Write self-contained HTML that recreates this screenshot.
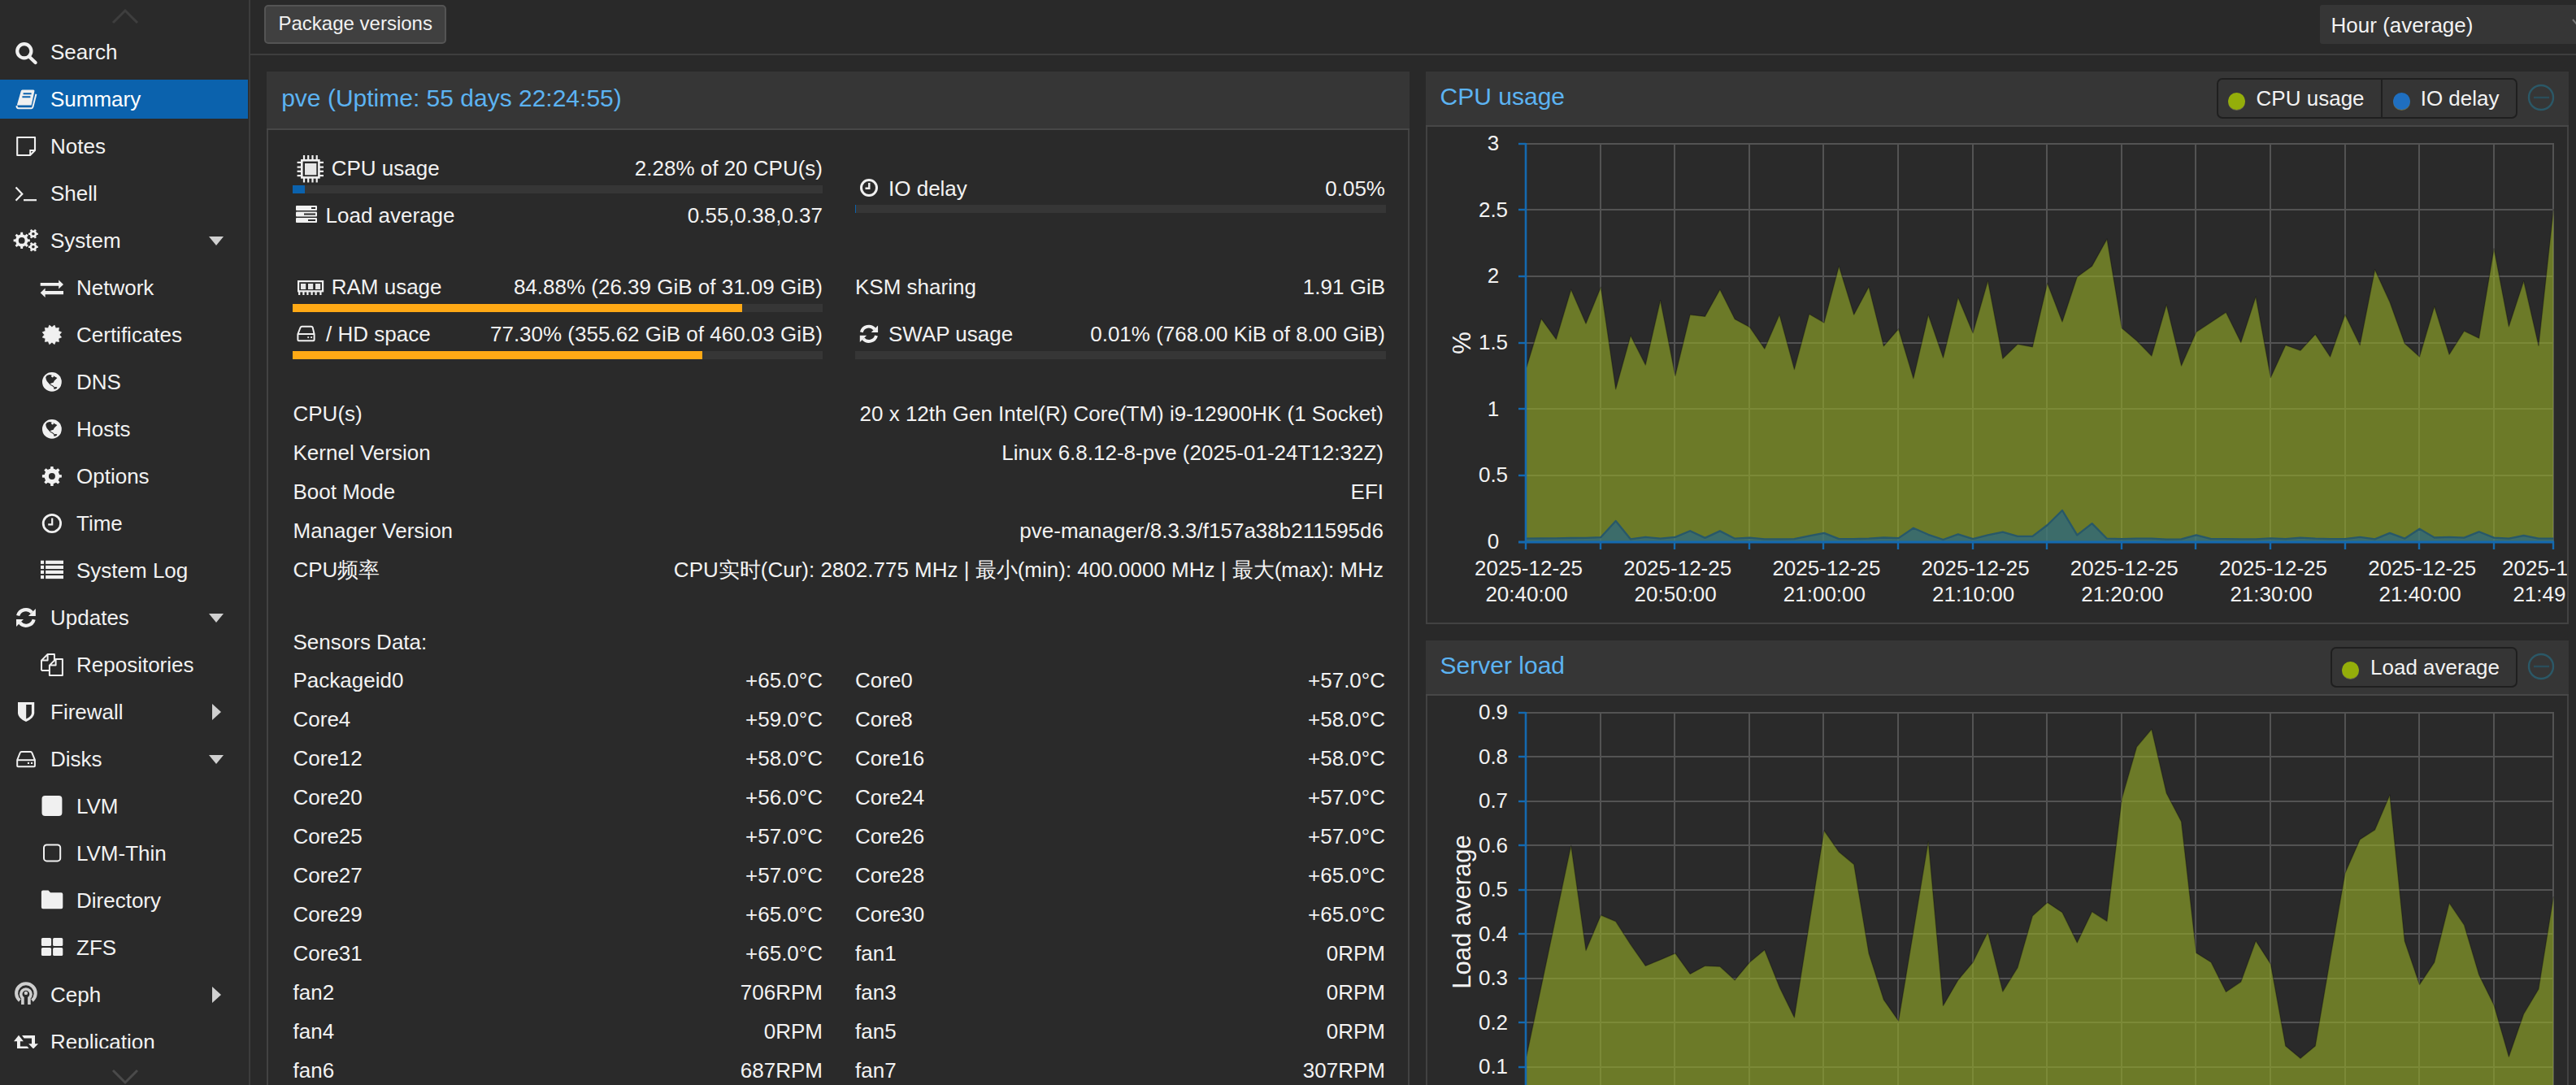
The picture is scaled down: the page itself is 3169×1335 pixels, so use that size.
<!DOCTYPE html>
<html><head><meta charset="utf-8"><style>
html,body{margin:0;padding:0;width:3169px;height:1335px;overflow:hidden;background:#292929;}
body{position:relative;font-family:"Liberation Sans", sans-serif;}
.t{position:absolute;white-space:nowrap;line-height:1;color:#f2f2f2;font-family:"Liberation Sans", sans-serif;}
.r{position:absolute;}
</style></head><body>
<div class="r" style="left:0px;top:0px;width:306px;height:1335px;background:#2a2a2a;"></div>
<div class="r" style="left:306px;top:0px;width:2px;height:1335px;background:#3c3c3c;"></div>
<div class="r" style="left:0px;top:98px;width:305px;height:48px;background:#0b62ad;"></div>
<div class="t" style="left:62px;top:51.3px;font-size:26px;color:#f2f2f2;">Search</div>
<div class="t" style="left:62px;top:109.3px;font-size:26px;color:#ffffff;">Summary</div>
<div class="t" style="left:62px;top:167.3px;font-size:26px;color:#f2f2f2;">Notes</div>
<div class="t" style="left:62px;top:225.3px;font-size:26px;color:#f2f2f2;">Shell</div>
<div class="t" style="left:62px;top:283.3px;font-size:26px;color:#f2f2f2;">System</div>
<div class="r" style="left:257px;top:291px;width:0;height:0;border-left:9.5px solid transparent;border-right:9.5px solid transparent;border-top:11px solid #d0d0d0"></div>
<div class="t" style="left:94px;top:341.3px;font-size:26px;color:#f2f2f2;">Network</div>
<div class="t" style="left:94px;top:399.3px;font-size:26px;color:#f2f2f2;">Certificates</div>
<div class="t" style="left:94px;top:457.3px;font-size:26px;color:#f2f2f2;">DNS</div>
<div class="t" style="left:94px;top:515.3px;font-size:26px;color:#f2f2f2;">Hosts</div>
<div class="t" style="left:94px;top:573.3px;font-size:26px;color:#f2f2f2;">Options</div>
<div class="t" style="left:94px;top:631.3px;font-size:26px;color:#f2f2f2;">Time</div>
<div class="t" style="left:94px;top:689.3px;font-size:26px;color:#f2f2f2;">System Log</div>
<div class="t" style="left:62px;top:747.3px;font-size:26px;color:#f2f2f2;">Updates</div>
<div class="r" style="left:257px;top:755px;width:0;height:0;border-left:9.5px solid transparent;border-right:9.5px solid transparent;border-top:11px solid #d0d0d0"></div>
<div class="t" style="left:94px;top:805.3px;font-size:26px;color:#f2f2f2;">Repositories</div>
<div class="t" style="left:62px;top:863.3px;font-size:26px;color:#f2f2f2;">Firewall</div>
<div class="r" style="left:261px;top:866px;width:0;height:0;border-top:10px solid transparent;border-bottom:10px solid transparent;border-left:11px solid #d0d0d0"></div>
<div class="t" style="left:62px;top:921.3px;font-size:26px;color:#f2f2f2;">Disks</div>
<div class="r" style="left:257px;top:929px;width:0;height:0;border-left:9.5px solid transparent;border-right:9.5px solid transparent;border-top:11px solid #d0d0d0"></div>
<div class="t" style="left:94px;top:979.3px;font-size:26px;color:#f2f2f2;">LVM</div>
<div class="t" style="left:94px;top:1037.3px;font-size:26px;color:#f2f2f2;">LVM-Thin</div>
<div class="t" style="left:94px;top:1095.3px;font-size:26px;color:#f2f2f2;">Directory</div>
<div class="t" style="left:94px;top:1153.3px;font-size:26px;color:#f2f2f2;">ZFS</div>
<div class="t" style="left:62px;top:1211.3px;font-size:26px;color:#f2f2f2;">Ceph</div>
<div class="r" style="left:261px;top:1214px;width:0;height:0;border-top:10px solid transparent;border-bottom:10px solid transparent;border-left:11px solid #d0d0d0"></div>
<div class="t" style="left:62px;top:1269.3px;font-size:26px;color:#f2f2f2;">Replication</div>
<svg class="r" style="left:0;top:0;width:306px;height:1290px" viewBox="0 0 306 1290"><circle cx="29.8" cy="62.8" r="8.6" fill="none" stroke="#f0f0f0" stroke-width="4.2"/><line x1="37" y1="70.8" x2="43.6" y2="77" stroke="#f0f0f0" stroke-width="4.3" stroke-linecap="round"/><path d="M27.5,110.4 H41 Q42.8,110.4 42.4,112.2 L38.6,129.6 H20.8 L25.8,112 Q26.2,110.4 27.5,110.4 Z" fill="#f0f0f0"/><path d="M28.6,115.2 H38.6 M27.4,119.2 H37.4" stroke="#0b62ad" stroke-width="1.9"/><path d="M20.6,130 Q20.2,133.2 23,133.2 H38.6 Q40,133.2 40.4,131.5 L44.4,115.8" fill="none" stroke="#f0f0f0" stroke-width="2"/><path d="M21.2,169 H43 V185 L37,191 H21.2 Z" fill="none" stroke="#f0f0f0" stroke-width="2.1" stroke-linejoin="round"/><path d="M43,185 H37.2 V191" fill="none" stroke="#f0f0f0" stroke-width="2"/><path d="M19.5,230.5 L27.3,238.8 L19.5,246.8" fill="none" stroke="#f0f0f0" stroke-width="2.2"/><path d="M29,246.2 H45" stroke="#f0f0f0" stroke-width="2.2"/><path d="M33.72,292.99 L34.13,294.30 L36.81,294.54 L36.81,297.26 L34.13,297.50 L33.72,298.81 L33.08,300.02 L34.81,302.09 L32.89,304.01 L30.82,302.28 L29.61,302.92 L28.30,303.33 L28.06,306.01 L25.34,306.01 L25.10,303.33 L23.79,302.92 L22.58,302.28 L20.51,304.01 L18.59,302.09 L20.32,300.02 L19.68,298.81 L19.27,297.50 L16.59,297.26 L16.59,294.54 L19.27,294.30 L19.68,292.99 L20.32,291.78 L18.59,289.71 L20.51,287.79 L22.58,289.52 L23.79,288.88 L25.10,288.47 L25.34,285.79 L28.06,285.79 L28.30,288.47 L29.61,288.88 L30.82,289.52 L32.89,287.79 L34.81,289.71 L33.08,291.78 Z M30.60,295.90 A3.9,3.9 0 1 0 22.80,295.90 A3.9,3.9 0 1 0 30.60,295.90 Z" fill="#f0f0f0" fill-rule="evenodd"/><path d="M44.71,285.60 L45.11,286.51 L46.79,286.64 L46.79,288.96 L45.11,289.09 L44.71,290.00 L44.12,290.80 L44.84,292.32 L42.84,293.48 L41.88,292.09 L40.90,292.20 L39.92,292.09 L38.96,293.48 L36.96,292.32 L37.68,290.80 L37.09,290.00 L36.69,289.09 L35.01,288.96 L35.01,286.64 L36.69,286.51 L37.09,285.60 L37.68,284.80 L36.96,283.28 L38.96,282.12 L39.92,283.51 L40.90,283.40 L41.88,283.51 L42.84,282.12 L44.84,283.28 L44.12,284.80 Z M42.70,287.80 A1.8,1.8 0 1 0 39.10,287.80 A1.8,1.8 0 1 0 42.70,287.80 Z" fill="#f0f0f0" fill-rule="evenodd"/><path d="M44.71,301.60 L45.11,302.51 L46.79,302.64 L46.79,304.96 L45.11,305.09 L44.71,306.00 L44.12,306.80 L44.84,308.32 L42.84,309.48 L41.88,308.09 L40.90,308.20 L39.92,308.09 L38.96,309.48 L36.96,308.32 L37.68,306.80 L37.09,306.00 L36.69,305.09 L35.01,304.96 L35.01,302.64 L36.69,302.51 L37.09,301.60 L37.68,300.80 L36.96,299.28 L38.96,298.12 L39.92,299.51 L40.90,299.40 L41.88,299.51 L42.84,298.12 L44.84,299.28 L44.12,300.80 Z M42.70,303.80 A1.8,1.8 0 1 0 39.10,303.80 A1.8,1.8 0 1 0 42.70,303.80 Z" fill="#f0f0f0" fill-rule="evenodd"/><path d="M49.7,348.1 H72.2 V344.5 L78,350 L72.2,355.4 V351.8 H49.7 Z" fill="#f0f0f0"/><path d="M78,357.9 H55.6 V354.6 L49.7,360.2 L55.6,366 V362.3 H78 Z" fill="#f0f0f0"/><path d="M67.06,400.12 L68.55,403.85 L72.53,403.27 L71.95,407.25 L75.68,408.74 L73.20,411.90 L75.68,415.06 L71.95,416.55 L72.53,420.53 L68.55,419.95 L67.06,423.68 L63.90,421.20 L60.74,423.68 L59.25,419.95 L55.27,420.53 L55.85,416.55 L52.12,415.06 L54.60,411.90 L52.12,408.74 L55.85,407.25 L55.27,403.27 L59.25,403.85 L60.74,400.12 L63.90,402.60 Z" fill="#f0f0f0" stroke="#f0f0f0" stroke-width="0.6" stroke-linejoin="round"/><circle cx="63.9" cy="469.9" r="11.9" fill="#f0f0f0"/><path d="M56.2,464.3 L57.7,461.9 L60.8,460.9 L63.7,461.4 L62.9,463.2 L64.5,464.5 L66,463.7 L65.5,462.2 L67.5,463.5 L70.4,465.0 L68.6,466.8 L66.8,468.4 L65.7,470.7 L63.9,471.2 L62.1,472.0 L61.6,473.5 L60.3,472.0 L57.7,468.9 L56.7,466.8 Z M66.5,476.4 L68.6,475.9 L70.4,476.6 L69.6,477.9 L67.5,478.7 L66,478.5 Z" fill="#2a2a2a"/><path d="M61.8,473.2 L64.6,474.6 L66.8,476.6" fill="none" stroke="#2a2a2a" stroke-width="1.1"/><circle cx="63.9" cy="527.9" r="11.9" fill="#f0f0f0"/><path d="M56.2,522.3 L57.7,519.9 L60.8,518.9 L63.7,519.4 L62.9,521.2 L64.5,522.5 L66,521.7 L65.5,520.2 L67.5,521.5 L70.4,523.0 L68.6,524.8 L66.8,526.4 L65.7,528.7 L63.9,529.2 L62.1,530.0 L61.6,531.5 L60.3,530.0 L57.7,526.9 L56.7,524.8 Z M66.5,534.4 L68.6,533.9 L70.4,534.6 L69.6,535.9 L67.5,536.7 L66,536.5 Z" fill="#2a2a2a"/><path d="M61.8,531.2 L64.6,532.6 L66.8,534.6" fill="none" stroke="#2a2a2a" stroke-width="1.1"/><path d="M72.49,582.34 L72.99,583.94 L75.89,584.29 L75.89,587.51 L72.99,587.86 L72.49,589.46 L71.71,590.94 L73.52,593.24 L71.24,595.52 L68.94,593.71 L67.46,594.49 L65.86,594.99 L65.51,597.89 L62.29,597.89 L61.94,594.99 L60.34,594.49 L58.86,593.71 L56.56,595.52 L54.28,593.24 L56.09,590.94 L55.31,589.46 L54.81,587.86 L51.91,587.51 L51.91,584.29 L54.81,583.94 L55.31,582.34 L56.09,580.86 L54.28,578.56 L56.56,576.28 L58.86,578.09 L60.34,577.31 L61.94,576.81 L62.29,573.91 L65.51,573.91 L65.86,576.81 L67.46,577.31 L68.94,578.09 L71.24,576.28 L73.52,578.56 L71.71,580.86 Z M67.90,585.90 A4.0,4.0 0 1 0 59.90,585.90 A4.0,4.0 0 1 0 67.90,585.90 Z" fill="#f0f0f0" fill-rule="evenodd"/><circle cx="63.9" cy="644" r="10.7" fill="none" stroke="#f0f0f0" stroke-width="2.8"/><path d="M64.2,637.5 V645.4 H59.2" fill="none" stroke="#f0f0f0" stroke-width="2.2"/><rect x="50" y="689.7" width="4.1" height="4.2" fill="#f0f0f0"/><rect x="56.1" y="689.7" width="21.9" height="4.2" fill="#f0f0f0"/><rect x="50" y="695.8" width="4.1" height="4.2" fill="#f0f0f0"/><rect x="56.1" y="695.8" width="21.9" height="4.2" fill="#f0f0f0"/><rect x="50" y="701.8" width="4.1" height="4.2" fill="#f0f0f0"/><rect x="56.1" y="701.8" width="21.9" height="4.2" fill="#f0f0f0"/><rect x="50" y="707.9" width="4.1" height="4.2" fill="#f0f0f0"/><rect x="56.1" y="707.9" width="21.9" height="4.2" fill="#f0f0f0"/><path d="M22.099999999999998,757.6 A10,10 0 0 1 39.4,753.6" fill="none" stroke="#f0f0f0" stroke-width="4.2"/><path d="M43.9,748.9 V757.9 H34.9 Z" fill="#f0f0f0"/><path d="M41.7,762.1999999999999 A10,10 0 0 1 24.4,766.1999999999999" fill="none" stroke="#f0f0f0" stroke-width="4.2"/><path d="M20,770.9 V761.9 H29 Z" fill="#f0f0f0"/><path d="M51,824.9 V812.6 L58.6,805 H66.9 V812.3 M60.3,824.9 H51 M51,812.6 H58.6 V805" fill="none" stroke="#f0f0f0" stroke-width="2" stroke-linejoin="round"/><path d="M60.9,830.9 V818.6 L68.6,811 H76.9 V830.9 Z M60.9,818.6 H68.6 V811" fill="none" stroke="#f0f0f0" stroke-width="2" stroke-linejoin="round"/><path d="M22,864 H42.2 V877.5 Q42,883.5 32,888 Q22,883.5 22,877.5 Z" fill="#f0f0f0"/><path d="M32.2,867 H38.9 V877.5 Q38.6,881.6 32.2,884.5 Z" fill="#2a2a2a"/><path d="M21.2,935 L24.6,926.5 Q25.2,925 26.5,925 H37.6 Q38.9,925 39.4,926.5 L42.9,935 V942.2 Q42.9,943.2 41.9,943.2 H22.2 Q21.2,943.2 21.2,942.2 Z" fill="none" stroke="#f0f0f0" stroke-width="2"/><path d="M21.2,935.2 H42.9" stroke="#f0f0f0" stroke-width="2"/><rect x="33.9" y="937.9" width="2.1" height="2.1" fill="#f0f0f0"/><rect x="38" y="937.9" width="2.1" height="2.1" fill="#f0f0f0"/><rect x="51.5" y="979" width="24.9" height="25" rx="4" fill="#f0f0f0"/><rect x="54" y="1039.4" width="20.2" height="20" rx="3.5" fill="none" stroke="#f0f0f0" stroke-width="2"/><path d="M50.9,1097.5 Q50.9,1095.5 52.9,1095.5 H59.5 L62,1098.3 H75.3 Q77.3,1098.3 77.3,1100.3 V1116.3 Q77.3,1118.3 75.3,1118.3 H52.9 Q50.9,1118.3 50.9,1116.3 Z" fill="#f0f0f0"/><rect x="50.9" y="1153.9" width="12.2" height="10.2" rx="1.6" fill="#f0f0f0"/><rect x="65.1" y="1153.9" width="12.2" height="10.2" rx="1.6" fill="#f0f0f0"/><rect x="50.9" y="1165.9" width="12.2" height="10.2" rx="1.6" fill="#f0f0f0"/><rect x="65.1" y="1165.9" width="12.2" height="10.2" rx="1.6" fill="#f0f0f0"/><path d="M24.299999999999997,1231.1000000000001 A11.8,11.8 0 1 1 39.5,1231.1000000000001" fill="none" stroke="#cfcfcf" stroke-width="4.1"/><path d="M27.9,1235.9 V1227.9 A6.2,6.2 0 1 1 35.9,1227.9 V1235.9" fill="none" stroke="#cfcfcf" stroke-width="3.6"/><circle cx="31.9" cy="1221.9" r="2.2" fill="#cfcfcf"/><path d="M17,1281.3 L23,1273.8 L28.9,1281.3 H24.9 V1287.6 H33.5 L35.6,1289.9 H21 V1281.3 Z" fill="#f0f0f0"/><path d="M27.1,1274 H43 V1284.2 H47 L41,1290.5 L35.1,1284.2 H39 V1277.6 H29.6 Z" fill="#f0f0f0"/></svg>
<div class="r" style="left:0px;top:1290px;width:306px;height:45px;background:#2a2a2a;"></div>
<div class="r" style="left:0px;top:0px;width:306px;height:38px;background:#2a2a2a;"></div>
<svg class="r" style="left:136px;top:6px;width:36px;height:26px" viewBox="0 0 36 26"><path d="M3 22 L18 7 L33 22" fill="none" stroke="#3e3e3e" stroke-width="3"/></svg>
<svg class="r" style="left:136px;top:1313px;width:36px;height:22px" viewBox="0 0 36 22"><path d="M3 4 L18 19 L33 4" fill="none" stroke="#4a4a4a" stroke-width="3"/></svg>
<div class="r" style="left:308px;top:0px;width:2861px;height:66px;background:#292929;"></div>
<div class="r" style="left:308px;top:66px;width:2861px;height:2px;background:#3e3e3e;"></div>
<div class="r" style="left:325px;top:6px;width:224px;height:48px;background:#404040;border:2px solid #545454;border-radius:5px;box-sizing:border-box"></div>
<div class="t" style="left:342.5px;top:17.1px;font-size:24px;color:#f2f2f2;">Package versions</div>
<div class="r" style="left:2854px;top:6px;width:315px;height:48px;background:#363636;border-radius:3px 0 0 3px"></div>
<div class="t" style="left:2867.6px;top:18.0px;font-size:26px;color:#f2f2f2;">Hour (average)</div>
<svg class="r" style="left:3160px;top:18px;width:9px;height:20px" viewBox="0 0 9 20"><path d="M5 6 L11 13" stroke="#777" stroke-width="2"/></svg>
<div class="r" style="left:328px;top:88px;width:1406px;height:70px;background:#363636;"></div>
<div class="r" style="left:328px;top:158px;width:1406px;height:2px;background:#474747;"></div>
<div class="r" style="left:328px;top:160px;width:1406px;height:1175px;background:#2a2a2a;"></div>
<div class="r" style="left:328px;top:160px;width:2px;height:1175px;background:#424242;"></div>
<div class="r" style="left:1732px;top:160px;width:2px;height:1175px;background:#424242;"></div>
<div class="t" style="left:346.2px;top:105.6px;font-size:30px;color:#5cb3f2;">pve (Uptime: 55 days 22:24:55)</div>
<svg class="r" style="left:0;top:0;width:420px;height:240px" viewBox="0 0 420 240"><rect x="372.9" y="191" width="2.2" height="5" fill="#f0f0f0"/><rect x="372.9" y="219" width="2.2" height="5.5" fill="#f0f0f0"/><rect x="378.09999999999997" y="191" width="2.2" height="5" fill="#f0f0f0"/><rect x="378.09999999999997" y="219" width="2.2" height="5.5" fill="#f0f0f0"/><rect x="383.4" y="191" width="2.2" height="5" fill="#f0f0f0"/><rect x="383.4" y="219" width="2.2" height="5.5" fill="#f0f0f0"/><rect x="388.59999999999997" y="191" width="2.2" height="5" fill="#f0f0f0"/><rect x="388.59999999999997" y="219" width="2.2" height="5.5" fill="#f0f0f0"/><rect x="365.6" y="198.8" width="5" height="2.2" fill="#f0f0f0"/><rect x="393" y="198.8" width="5" height="2.2" fill="#f0f0f0"/><rect x="365.6" y="204.5" width="5" height="2.2" fill="#f0f0f0"/><rect x="393" y="204.5" width="5" height="2.2" fill="#f0f0f0"/><rect x="365.6" y="209.70000000000002" width="5" height="2.2" fill="#f0f0f0"/><rect x="393" y="209.70000000000002" width="5" height="2.2" fill="#f0f0f0"/><rect x="365.6" y="215.0" width="5" height="2.2" fill="#f0f0f0"/><rect x="393" y="215.0" width="5" height="2.2" fill="#f0f0f0"/><rect x="371.3" y="197.3" width="21.1" height="21.1" fill="none" stroke="#f0f0f0" stroke-width="2.6"/><rect x="375" y="201" width="14.3" height="14.3" fill="#e6e6e6"/></svg>
<div class="t" style="left:407.7px;top:194.0px;font-size:26px;color:#f2f2f2;">CPU usage</div>
<div class="t" style="right:2157px;top:194.0px;font-size:26px;color:#f2f2f2;">2.28% of 20 CPU(s)</div>
<div class="r" style="left:360px;top:228px;width:652px;height:10px;background:#363636;"></div>
<div class="r" style="left:360px;top:228px;width:15px;height:10px;background:#0b62ad;"></div>
<svg class="r" style="left:364px;top:253px;width:26px;height:21px" viewBox="0 0 26 21"><rect x="0" y="0" width="26" height="6" rx="1" fill="#f0f0f0"/><rect x="0" y="7.5" width="26" height="6" rx="1" fill="#f0f0f0"/><rect x="0" y="15" width="26" height="6" rx="1" fill="#f0f0f0"/><rect x="19" y="2" width="5" height="2" fill="#2a2a2a"/><rect x="10" y="9.5" width="14" height="2" fill="#2a2a2a"/><rect x="15" y="17" width="9" height="2" fill="#2a2a2a"/></svg>
<div class="t" style="left:400.5px;top:252.2px;font-size:26px;color:#f2f2f2;">Load average</div>
<div class="t" style="right:2157px;top:252.2px;font-size:26px;color:#f2f2f2;">0.55,0.38,0.37</div>
<svg class="r" style="left:1057px;top:219px;width:24px;height:24px" viewBox="0 0 24 24"><circle cx="12" cy="12" r="9.5" fill="none" stroke="#f0f0f0" stroke-width="3"/><path d="M12.3 6 V12.8 H7.5" fill="none" stroke="#f0f0f0" stroke-width="2.4"/></svg>
<div class="t" style="left:1093px;top:218.8px;font-size:26px;color:#f2f2f2;">IO delay</div>
<div class="t" style="right:1465px;top:218.8px;font-size:26px;color:#f2f2f2;">0.05%</div>
<div class="r" style="left:1052px;top:252px;width:653px;height:10px;background:#363636;"></div>
<div class="r" style="left:1052px;top:252px;width:1px;height:10px;background:#0b62ad;"></div>
<svg class="r" style="left:0;top:0;width:420px;height:440px" viewBox="0 0 420 440"><rect x="367.1" y="346.1" width="30" height="12.2" fill="none" stroke="#f0f0f0" stroke-width="2.2"/><rect x="370" y="349" width="6.2" height="7" fill="#e6e6e6"/><rect x="379" y="349" width="6.2" height="7" fill="#e6e6e6"/><rect x="388" y="349" width="6.2" height="7" fill="#e6e6e6"/><rect x="367.09999999999997" y="359" width="2.2" height="4" fill="#f0f0f0"/><rect x="372.29999999999995" y="359" width="2.2" height="4" fill="#f0f0f0"/><rect x="377.29999999999995" y="359" width="2.2" height="4" fill="#f0f0f0"/><rect x="382.5" y="359" width="2.2" height="4" fill="#f0f0f0"/><rect x="387.5" y="359" width="2.2" height="4" fill="#f0f0f0"/><rect x="393.29999999999995" y="359" width="2.2" height="4" fill="#f0f0f0"/></svg>
<div class="t" style="left:407.7px;top:340.4px;font-size:26px;color:#f2f2f2;">RAM usage</div>
<div class="t" style="right:2157px;top:340.4px;font-size:26px;color:#f2f2f2;">84.88% (26.39 GiB of 31.09 GiB)</div>
<div class="r" style="left:360px;top:374px;width:652px;height:10px;background:#363636;"></div>
<div class="r" style="left:360px;top:374px;width:553px;height:10px;background:#ffa915;"></div>
<svg class="r" style="left:0;top:0;width:420px;height:440px" viewBox="0 0 420 440"><path d="M366.4,411 L369.6,403 Q370.2,401.8 371.4,401.8 H383 Q384.2,401.8 384.7,403 L386.6,411 V418 Q386.6,419.2 385.4,419.2 H367.6 Q366.4,419.2 366.4,418 Z" fill="none" stroke="#f0f0f0" stroke-width="2"/><path d="M366.4,411 H386.6" stroke="#f0f0f0" stroke-width="2"/><circle cx="379.2" cy="415.1" r="1.1" fill="#f0f0f0"/><circle cx="383.1" cy="415.1" r="1.1" fill="#f0f0f0"/></svg>
<div class="t" style="left:401px;top:397.7px;font-size:26px;color:#f2f2f2;">/ HD space</div>
<div class="t" style="right:2157px;top:397.7px;font-size:26px;color:#f2f2f2;">77.30% (355.62 GiB of 460.03 GiB)</div>
<div class="r" style="left:360px;top:432px;width:652px;height:10px;background:#363636;"></div>
<div class="r" style="left:360px;top:432px;width:504px;height:10px;background:#ffa915;"></div>
<div class="t" style="left:1052px;top:340.4px;font-size:26px;color:#f2f2f2;">KSM sharing</div>
<div class="t" style="right:1465px;top:340.4px;font-size:26px;color:#f2f2f2;">1.91 GiB</div>
<svg class="r" style="left:0;top:0;width:1200px;height:440px" viewBox="0 0 1200 440"><g transform="translate(1068.9 410.8) scale(0.93) translate(-31.9 -759.9)"><path d="M22.1,757.6 A10,10 0 0 1 39.4,753.6" fill="none" stroke="#f0f0f0" stroke-width="4.2"/><path d="M43.9,748.9 V757.9 H34.9 Z" fill="#f0f0f0"/><path d="M41.7,762.2 A10,10 0 0 1 24.4,766.2" fill="none" stroke="#f0f0f0" stroke-width="4.2"/><path d="M20,770.9 V761.9 H29 Z" fill="#f0f0f0"/></g></svg>
<div class="t" style="left:1093px;top:397.7px;font-size:26px;color:#f2f2f2;">SWAP usage</div>
<div class="t" style="right:1465px;top:397.7px;font-size:26px;color:#f2f2f2;">0.01% (768.00 KiB of 8.00 GiB)</div>
<div class="r" style="left:1052px;top:432px;width:653px;height:10px;background:#363636;"></div>
<div class="t" style="left:360.5px;top:495.5px;font-size:26px;color:#f2f2f2;">CPU(s)</div>
<div class="t" style="right:1467px;top:495.5px;font-size:26px;color:#f2f2f2;">20 x 12th Gen Intel(R) Core(TM) i9-12900HK (1 Socket)</div>
<div class="t" style="left:360.5px;top:543.5px;font-size:26px;color:#f2f2f2;">Kernel Version</div>
<div class="t" style="right:1467px;top:543.5px;font-size:26px;color:#f2f2f2;">Linux 6.8.12-8-pve (2025-01-24T12:32Z)</div>
<div class="t" style="left:360.5px;top:591.5px;font-size:26px;color:#f2f2f2;">Boot Mode</div>
<div class="t" style="right:1467px;top:591.5px;font-size:26px;color:#f2f2f2;">EFI</div>
<div class="t" style="left:360.5px;top:639.5px;font-size:26px;color:#f2f2f2;">Manager Version</div>
<div class="t" style="right:1467px;top:639.5px;font-size:26px;color:#f2f2f2;">pve-manager/8.3.3/f157a38b211595d6</div>
<div class="t" style="left:360.5px;top:687.5px;font-size:26px;color:#f2f2f2;">CPU频率</div>
<div class="t" style="right:1467px;top:687.5px;font-size:26px;color:#f2f2f2;">CPU实时(Cur): 2802.775 MHz | 最小(min): 400.0000 MHz | 最大(max): MHz</div>
<div class="t" style="left:360.5px;top:776.5px;font-size:26px;color:#f2f2f2;">Sensors Data:</div>
<div class="t" style="left:360.5px;top:823.8px;font-size:26px;color:#f2f2f2;">Packageid0</div>
<div class="t" style="right:2157px;top:823.8px;font-size:26px;color:#f2f2f2;">+65.0°C</div>
<div class="t" style="left:1052px;top:823.8px;font-size:26px;color:#f2f2f2;">Core0</div>
<div class="t" style="right:1465px;top:823.8px;font-size:26px;color:#f2f2f2;">+57.0°C</div>
<div class="t" style="left:360.5px;top:871.8px;font-size:26px;color:#f2f2f2;">Core4</div>
<div class="t" style="right:2157px;top:871.8px;font-size:26px;color:#f2f2f2;">+59.0°C</div>
<div class="t" style="left:1052px;top:871.8px;font-size:26px;color:#f2f2f2;">Core8</div>
<div class="t" style="right:1465px;top:871.8px;font-size:26px;color:#f2f2f2;">+58.0°C</div>
<div class="t" style="left:360.5px;top:919.8px;font-size:26px;color:#f2f2f2;">Core12</div>
<div class="t" style="right:2157px;top:919.8px;font-size:26px;color:#f2f2f2;">+58.0°C</div>
<div class="t" style="left:1052px;top:919.8px;font-size:26px;color:#f2f2f2;">Core16</div>
<div class="t" style="right:1465px;top:919.8px;font-size:26px;color:#f2f2f2;">+58.0°C</div>
<div class="t" style="left:360.5px;top:967.8px;font-size:26px;color:#f2f2f2;">Core20</div>
<div class="t" style="right:2157px;top:967.8px;font-size:26px;color:#f2f2f2;">+56.0°C</div>
<div class="t" style="left:1052px;top:967.8px;font-size:26px;color:#f2f2f2;">Core24</div>
<div class="t" style="right:1465px;top:967.8px;font-size:26px;color:#f2f2f2;">+57.0°C</div>
<div class="t" style="left:360.5px;top:1015.8px;font-size:26px;color:#f2f2f2;">Core25</div>
<div class="t" style="right:2157px;top:1015.8px;font-size:26px;color:#f2f2f2;">+57.0°C</div>
<div class="t" style="left:1052px;top:1015.8px;font-size:26px;color:#f2f2f2;">Core26</div>
<div class="t" style="right:1465px;top:1015.8px;font-size:26px;color:#f2f2f2;">+57.0°C</div>
<div class="t" style="left:360.5px;top:1063.8px;font-size:26px;color:#f2f2f2;">Core27</div>
<div class="t" style="right:2157px;top:1063.8px;font-size:26px;color:#f2f2f2;">+57.0°C</div>
<div class="t" style="left:1052px;top:1063.8px;font-size:26px;color:#f2f2f2;">Core28</div>
<div class="t" style="right:1465px;top:1063.8px;font-size:26px;color:#f2f2f2;">+65.0°C</div>
<div class="t" style="left:360.5px;top:1111.8px;font-size:26px;color:#f2f2f2;">Core29</div>
<div class="t" style="right:2157px;top:1111.8px;font-size:26px;color:#f2f2f2;">+65.0°C</div>
<div class="t" style="left:1052px;top:1111.8px;font-size:26px;color:#f2f2f2;">Core30</div>
<div class="t" style="right:1465px;top:1111.8px;font-size:26px;color:#f2f2f2;">+65.0°C</div>
<div class="t" style="left:360.5px;top:1159.8px;font-size:26px;color:#f2f2f2;">Core31</div>
<div class="t" style="right:2157px;top:1159.8px;font-size:26px;color:#f2f2f2;">+65.0°C</div>
<div class="t" style="left:1052px;top:1159.8px;font-size:26px;color:#f2f2f2;">fan1</div>
<div class="t" style="right:1465px;top:1159.8px;font-size:26px;color:#f2f2f2;">0RPM</div>
<div class="t" style="left:360.5px;top:1207.8px;font-size:26px;color:#f2f2f2;">fan2</div>
<div class="t" style="right:2157px;top:1207.8px;font-size:26px;color:#f2f2f2;">706RPM</div>
<div class="t" style="left:1052px;top:1207.8px;font-size:26px;color:#f2f2f2;">fan3</div>
<div class="t" style="right:1465px;top:1207.8px;font-size:26px;color:#f2f2f2;">0RPM</div>
<div class="t" style="left:360.5px;top:1255.8px;font-size:26px;color:#f2f2f2;">fan4</div>
<div class="t" style="right:2157px;top:1255.8px;font-size:26px;color:#f2f2f2;">0RPM</div>
<div class="t" style="left:1052px;top:1255.8px;font-size:26px;color:#f2f2f2;">fan5</div>
<div class="t" style="right:1465px;top:1255.8px;font-size:26px;color:#f2f2f2;">0RPM</div>
<div class="t" style="left:360.5px;top:1303.8px;font-size:26px;color:#f2f2f2;">fan6</div>
<div class="t" style="right:2157px;top:1303.8px;font-size:26px;color:#f2f2f2;">687RPM</div>
<div class="t" style="left:1052px;top:1303.8px;font-size:26px;color:#f2f2f2;">fan7</div>
<div class="t" style="right:1465px;top:1303.8px;font-size:26px;color:#f2f2f2;">307RPM</div>
<div class="r" style="left:1754px;top:88px;width:1406px;height:66px;background:#363636;"></div>
<div class="r" style="left:1754px;top:154px;width:1406px;height:2px;background:#474747;"></div>
<div class="r" style="left:1754px;top:156px;width:1406px;height:612px;background:#2a2a2a;"></div>
<div class="r" style="left:1754px;top:156px;width:2px;height:612px;background:#424242;"></div>
<div class="r" style="left:3158px;top:156px;width:2px;height:612px;background:#424242;"></div>
<div class="t" style="left:1771.6px;top:103.9px;font-size:30px;color:#5cb3f2;">CPU usage</div>
<div class="r" style="left:1754px;top:766px;width:1406px;height:2px;background:#424242;"></div>
<div class="r" style="left:2727px;top:96px;width:370px;height:50px;box-sizing:border-box;border:2px solid #1f1f1f;border-radius:7px;background:#353535"></div>
<div class="r" style="left:2929px;top:96px;width:2px;height:50px;background:#1f1f1f;"></div>
<div class="r" style="left:2741.0px;top:113.5px;width:21px;height:21px;border-radius:50%;background:#94ae0a;box-shadow:0 1px 0 #6a6a4a"></div>
<div class="t" style="left:2775.6px;top:108.0px;font-size:26px;color:#f2f2f2;">CPU usage</div>
<div class="r" style="left:2943.5px;top:113.5px;width:21px;height:21px;border-radius:50%;background:#1f6fc0;box-shadow:0 1px 0 #6a6a4a"></div>
<div class="t" style="left:2977.7px;top:108.0px;font-size:26px;color:#f2f2f2;">IO delay</div>
<svg class="r" style="left:3109px;top:103px;width:34px;height:34px" viewBox="0 0 34 34"><circle cx="17" cy="17" r="15" fill="none" stroke="#2b5867" stroke-width="2.4"/><line x1="8" y1="17" x2="27" y2="17" stroke="#2a4d5a" stroke-width="2.4"/></svg>
<div class="r" style="left:1754px;top:788px;width:1406px;height:66px;background:#363636;"></div>
<div class="r" style="left:1754px;top:854px;width:1406px;height:2px;background:#474747;"></div>
<div class="r" style="left:1754px;top:856px;width:1406px;height:479px;background:#2a2a2a;"></div>
<div class="r" style="left:1754px;top:856px;width:2px;height:479px;background:#424242;"></div>
<div class="r" style="left:3158px;top:856px;width:2px;height:479px;background:#424242;"></div>
<div class="t" style="left:1771.6px;top:803.9px;font-size:30px;color:#5cb3f2;">Server load</div>
<div class="r" style="left:2867px;top:796px;width:230px;height:50px;box-sizing:border-box;border:2px solid #1f1f1f;border-radius:7px;background:#353535"></div>
<div class="r" style="left:2881.2px;top:813.5px;width:21px;height:21px;border-radius:50%;background:#94ae0a;box-shadow:0 1px 0 #6a6a4a"></div>
<div class="t" style="left:2916px;top:808.0px;font-size:26px;color:#f2f2f2;">Load average</div>
<svg class="r" style="left:3109px;top:803px;width:34px;height:34px" viewBox="0 0 34 34"><circle cx="17" cy="17" r="15" fill="none" stroke="#2b5867" stroke-width="2.4"/><line x1="8" y1="17" x2="27" y2="17" stroke="#2a4d5a" stroke-width="2.4"/></svg>
<svg class="r" style="left:0;top:0;width:3169px;height:1335px" viewBox="0 0 3169 1335"><rect x="1877" y="176.0" width="1265" height="2" fill="#535353"/><rect x="1877" y="257.0" width="1265" height="2" fill="#535353"/><rect x="1877" y="339.0" width="1265" height="2" fill="#535353"/><rect x="1877" y="421.0" width="1265" height="2" fill="#535353"/><rect x="1877" y="502.0" width="1265" height="2" fill="#535353"/><rect x="1877" y="584.0" width="1265" height="2" fill="#535353"/><rect x="1968.0" y="176" width="2" height="491" fill="#535353"/><rect x="2059.0" y="176" width="2" height="491" fill="#535353"/><rect x="2151.0" y="176" width="2" height="491" fill="#535353"/><rect x="2242.0" y="176" width="2" height="491" fill="#535353"/><rect x="2334.0" y="176" width="2" height="491" fill="#535353"/><rect x="2426.0" y="176" width="2" height="491" fill="#535353"/><rect x="2517.0" y="176" width="2" height="491" fill="#535353"/><rect x="2609.0" y="176" width="2" height="491" fill="#535353"/><rect x="2700.0" y="176" width="2" height="491" fill="#535353"/><rect x="2792.0" y="176" width="2" height="491" fill="#535353"/><rect x="2884.0" y="176" width="2" height="491" fill="#535353"/><rect x="2975.0" y="176" width="2" height="491" fill="#535353"/><rect x="3067.0" y="176" width="2" height="491" fill="#535353"/><rect x="3140.0" y="176" width="2" height="491" fill="#535353"/><polygon points="1877.0,666.5 1877.8,452.4 1896.1,392.2 1914.4,417.5 1932.7,356.2 1951.0,398.2 1969.4,353.3 1987.7,478.9 2006.0,413.0 2024.3,449.1 2042.6,369.5 2060.9,462.3 2079.2,387.2 2097.5,389.4 2115.9,356.2 2134.2,392.7 2152.5,402.6 2170.8,429.2 2189.1,387.2 2207.4,454.6 2225.7,386.5 2244.0,397.1 2262.3,327.4 2280.7,387.2 2299.0,352.9 2317.3,425.9 2335.6,404.8 2353.9,465.7 2372.2,387.2 2390.5,440.2 2408.8,366.1 2427.1,409.8 2445.5,345.6 2463.8,441.3 2482.1,423.6 2500.4,426.9 2518.7,348.4 2537.0,396.0 2555.3,340.7 2573.6,327.4 2592.0,294.2 2610.3,403.7 2628.6,419.2 2646.9,438.0 2665.2,374.9 2683.5,450.1 2701.8,408.6 2720.1,396.5 2738.4,384.3 2756.8,421.4 2775.1,365.0 2793.4,464.5 2811.7,424.7 2830.0,431.3 2848.3,411.4 2866.6,439.1 2884.9,387.1 2903.2,424.7 2921.6,331.8 2939.9,371.6 2958.2,422.5 2976.5,439.1 2994.8,377.0 3013.1,436.2 3031.4,407.3 3049.7,416.2 3068.1,305.9 3086.4,401.8 3104.7,345.8 3123.0,425.4 3141.3,257.4 3141,666.5" fill="rgba(144,166,40,0.65)"/><polyline points="1877.8,452.4 1896.1,392.2 1914.4,417.5 1932.7,356.2 1951.0,398.2 1969.4,353.3 1987.7,478.9 2006.0,413.0 2024.3,449.1 2042.6,369.5 2060.9,462.3 2079.2,387.2 2097.5,389.4 2115.9,356.2 2134.2,392.7 2152.5,402.6 2170.8,429.2 2189.1,387.2 2207.4,454.6 2225.7,386.5 2244.0,397.1 2262.3,327.4 2280.7,387.2 2299.0,352.9 2317.3,425.9 2335.6,404.8 2353.9,465.7 2372.2,387.2 2390.5,440.2 2408.8,366.1 2427.1,409.8 2445.5,345.6 2463.8,441.3 2482.1,423.6 2500.4,426.9 2518.7,348.4 2537.0,396.0 2555.3,340.7 2573.6,327.4 2592.0,294.2 2610.3,403.7 2628.6,419.2 2646.9,438.0 2665.2,374.9 2683.5,450.1 2701.8,408.6 2720.1,396.5 2738.4,384.3 2756.8,421.4 2775.1,365.0 2793.4,464.5 2811.7,424.7 2830.0,431.3 2848.3,411.4 2866.6,439.1 2884.9,387.1 2903.2,424.7 2921.6,331.8 2939.9,371.6 2958.2,422.5 2976.5,439.1 2994.8,377.0 3013.1,436.2 3031.4,407.3 3049.7,416.2 3068.1,305.9 3086.4,401.8 3104.7,345.8 3123.0,425.4 3141.3,257.4" fill="none" stroke="rgba(0,0,0,0.28)" stroke-width="1.4" stroke-linejoin="round"/><polygon points="1877.0,666.5 1877.8,662.7 1896.1,662.5 1914.4,662.3 1932.7,662.0 1951.0,661.8 1969.4,661.1 1987.7,641.0 2006.0,663.4 2024.3,660.9 2042.6,662.7 2060.9,660.9 2079.2,653.2 2097.5,661.9 2115.9,653.4 2134.2,662.7 2152.5,661.6 2170.8,663.4 2189.1,663.4 2207.4,663.1 2225.7,659.4 2244.0,655.9 2262.3,663.1 2280.7,663.1 2299.0,662.7 2317.3,661.5 2335.6,662.1 2353.9,649.7 2372.2,657.8 2390.5,664.0 2408.8,657.4 2427.1,663.1 2445.5,658.4 2463.8,654.7 2482.1,659.9 2500.4,659.9 2518.7,646.0 2537.0,628.0 2555.3,658.4 2573.6,644.1 2592.0,662.7 2610.3,663.1 2628.6,662.7 2646.9,662.7 2665.2,663.6 2683.5,663.4 2701.8,658.4 2720.1,663.1 2738.4,663.1 2756.8,663.4 2775.1,663.4 2793.4,662.4 2811.7,663.1 2830.0,661.7 2848.3,662.7 2866.6,663.1 2884.9,663.1 2903.2,660.9 2921.6,663.4 2939.9,655.9 2958.2,662.7 2976.5,650.7 2994.8,661.5 3013.1,660.8 3031.4,661.6 3049.7,654.3 3068.1,661.6 3086.4,662.7 3104.7,659.0 3123.0,662.7 3141.3,662.7 3141,666.5" fill="rgba(17,95,166,0.52)"/><polyline points="1877.8,662.7 1896.1,662.5 1914.4,662.3 1932.7,662.0 1951.0,661.8 1969.4,661.1 1987.7,641.0 2006.0,663.4 2024.3,660.9 2042.6,662.7 2060.9,660.9 2079.2,653.2 2097.5,661.9 2115.9,653.4 2134.2,662.7 2152.5,661.6 2170.8,663.4 2189.1,663.4 2207.4,663.1 2225.7,659.4 2244.0,655.9 2262.3,663.1 2280.7,663.1 2299.0,662.7 2317.3,661.5 2335.6,662.1 2353.9,649.7 2372.2,657.8 2390.5,664.0 2408.8,657.4 2427.1,663.1 2445.5,658.4 2463.8,654.7 2482.1,659.9 2500.4,659.9 2518.7,646.0 2537.0,628.0 2555.3,658.4 2573.6,644.1 2592.0,662.7 2610.3,663.1 2628.6,662.7 2646.9,662.7 2665.2,663.6 2683.5,663.4 2701.8,658.4 2720.1,663.1 2738.4,663.1 2756.8,663.4 2775.1,663.4 2793.4,662.4 2811.7,663.1 2830.0,661.7 2848.3,662.7 2866.6,663.1 2884.9,663.1 2903.2,660.9 2921.6,663.4 2939.9,655.9 2958.2,662.7 2976.5,650.7 2994.8,661.5 3013.1,660.8 3031.4,661.6 3049.7,654.3 3068.1,661.6 3086.4,662.7 3104.7,659.0 3123.0,662.7 3141.3,662.7" fill="none" stroke="#285869" stroke-width="2.3" stroke-linejoin="round"/><rect x="1875.7" y="176" width="2.6" height="492" fill="#1469af"/><rect x="1868" y="665.5" width="1274" height="3" fill="#1469af"/><rect x="1868" y="175.8" width="9" height="2.4" fill="#1469af"/><rect x="1868" y="256.8" width="9" height="2.4" fill="#1469af"/><rect x="1868" y="338.8" width="9" height="2.4" fill="#1469af"/><rect x="1868" y="420.8" width="9" height="2.4" fill="#1469af"/><rect x="1868" y="501.8" width="9" height="2.4" fill="#1469af"/><rect x="1868" y="583.8" width="9" height="2.4" fill="#1469af"/><rect x="1875.8" y="666" width="2.4" height="10" fill="#1469af"/><rect x="1967.8" y="666" width="2.4" height="10" fill="#1469af"/><rect x="2058.8" y="666" width="2.4" height="10" fill="#1469af"/><rect x="2150.8" y="666" width="2.4" height="10" fill="#1469af"/><rect x="2241.8" y="666" width="2.4" height="10" fill="#1469af"/><rect x="2333.8" y="666" width="2.4" height="10" fill="#1469af"/><rect x="2425.8" y="666" width="2.4" height="10" fill="#1469af"/><rect x="2516.8" y="666" width="2.4" height="10" fill="#1469af"/><rect x="2608.8" y="666" width="2.4" height="10" fill="#1469af"/><rect x="2699.8" y="666" width="2.4" height="10" fill="#1469af"/><rect x="2791.8" y="666" width="2.4" height="10" fill="#1469af"/><rect x="2883.8" y="666" width="2.4" height="10" fill="#1469af"/><rect x="2974.8" y="666" width="2.4" height="10" fill="#1469af"/><rect x="3066.8" y="666" width="2.4" height="10" fill="#1469af"/><rect x="3139.8" y="666" width="2.4" height="10" fill="#1469af"/><rect x="1877" y="876.0" width="1265" height="2" fill="#535353"/><rect x="1877" y="930.0" width="1265" height="2" fill="#535353"/><rect x="1877" y="985.0" width="1265" height="2" fill="#535353"/><rect x="1877" y="1039.0" width="1265" height="2" fill="#535353"/><rect x="1877" y="1094.0" width="1265" height="2" fill="#535353"/><rect x="1877" y="1148.0" width="1265" height="2" fill="#535353"/><rect x="1877" y="1203.0" width="1265" height="2" fill="#535353"/><rect x="1877" y="1257.0" width="1265" height="2" fill="#535353"/><rect x="1877" y="1312.0" width="1265" height="2" fill="#535353"/><rect x="1968.0" y="876" width="2" height="459" fill="#535353"/><rect x="2059.0" y="876" width="2" height="459" fill="#535353"/><rect x="2151.0" y="876" width="2" height="459" fill="#535353"/><rect x="2242.0" y="876" width="2" height="459" fill="#535353"/><rect x="2334.0" y="876" width="2" height="459" fill="#535353"/><rect x="2426.0" y="876" width="2" height="459" fill="#535353"/><rect x="2517.0" y="876" width="2" height="459" fill="#535353"/><rect x="2609.0" y="876" width="2" height="459" fill="#535353"/><rect x="2700.0" y="876" width="2" height="459" fill="#535353"/><rect x="2792.0" y="876" width="2" height="459" fill="#535353"/><rect x="2884.0" y="876" width="2" height="459" fill="#535353"/><rect x="2975.0" y="876" width="2" height="459" fill="#535353"/><rect x="3067.0" y="876" width="2" height="459" fill="#535353"/><rect x="3140.0" y="876" width="2" height="459" fill="#535353"/><polygon points="1877.0,1367 1877.8,1300.2 1896.1,1213.7 1914.4,1127.1 1932.7,1040.3 1951.0,1169.5 1969.4,1126.0 1987.7,1133.8 2006.0,1162.3 2024.3,1188.4 2042.6,1180.9 2060.9,1173.0 2079.2,1198.4 2097.5,1188.4 2115.9,1189.3 2134.2,1205.9 2152.5,1184.0 2170.8,1168.7 2189.1,1214.6 2207.4,1251.9 2225.7,1136.7 2244.0,1022.0 2262.3,1048.3 2280.7,1063.6 2299.0,1173.0 2317.3,1230.0 2335.6,1256.2 2353.9,1146.0 2372.2,1035.1 2390.5,1237.4 2408.8,1205.9 2427.1,1184.0 2445.5,1146.8 2463.8,1220.1 2482.1,1190.6 2500.4,1127.1 2518.7,1110.4 2537.0,1122.7 2555.3,1159.9 2573.6,1121.8 2592.0,1133.6 2610.3,982.6 2628.6,919.1 2646.9,897.2 2665.2,976.0 2683.5,1011.0 2701.8,1172.4 2720.1,1184.0 2738.4,1220.5 2756.8,1208.1 2775.1,1157.7 2793.4,1186.2 2811.7,1286.9 2830.0,1302.2 2848.3,1286.9 2866.6,1180.0 2884.9,1074.5 2903.2,1032.9 2921.6,1021.1 2939.9,978.2 2958.2,1157.8 2976.5,1211.5 2994.8,1184.0 3013.1,1111.1 3031.4,1138.1 3049.7,1199.5 3068.1,1236.7 3086.4,1300.2 3104.7,1247.6 3123.0,1217.0 3141.3,1103.1 3141,1367" fill="rgba(144,166,40,0.65)"/><polyline points="1877.8,1300.2 1896.1,1213.7 1914.4,1127.1 1932.7,1040.3 1951.0,1169.5 1969.4,1126.0 1987.7,1133.8 2006.0,1162.3 2024.3,1188.4 2042.6,1180.9 2060.9,1173.0 2079.2,1198.4 2097.5,1188.4 2115.9,1189.3 2134.2,1205.9 2152.5,1184.0 2170.8,1168.7 2189.1,1214.6 2207.4,1251.9 2225.7,1136.7 2244.0,1022.0 2262.3,1048.3 2280.7,1063.6 2299.0,1173.0 2317.3,1230.0 2335.6,1256.2 2353.9,1146.0 2372.2,1035.1 2390.5,1237.4 2408.8,1205.9 2427.1,1184.0 2445.5,1146.8 2463.8,1220.1 2482.1,1190.6 2500.4,1127.1 2518.7,1110.4 2537.0,1122.7 2555.3,1159.9 2573.6,1121.8 2592.0,1133.6 2610.3,982.6 2628.6,919.1 2646.9,897.2 2665.2,976.0 2683.5,1011.0 2701.8,1172.4 2720.1,1184.0 2738.4,1220.5 2756.8,1208.1 2775.1,1157.7 2793.4,1186.2 2811.7,1286.9 2830.0,1302.2 2848.3,1286.9 2866.6,1180.0 2884.9,1074.5 2903.2,1032.9 2921.6,1021.1 2939.9,978.2 2958.2,1157.8 2976.5,1211.5 2994.8,1184.0 3013.1,1111.1 3031.4,1138.1 3049.7,1199.5 3068.1,1236.7 3086.4,1300.2 3104.7,1247.6 3123.0,1217.0 3141.3,1103.1" fill="none" stroke="rgba(0,0,0,0.28)" stroke-width="1.4" stroke-linejoin="round"/><rect x="1875.7" y="876" width="2.6" height="459" fill="#1469af"/><rect x="1868" y="875.8" width="9" height="2.4" fill="#1469af"/><rect x="1868" y="929.8" width="9" height="2.4" fill="#1469af"/><rect x="1868" y="984.8" width="9" height="2.4" fill="#1469af"/><rect x="1868" y="1038.8" width="9" height="2.4" fill="#1469af"/><rect x="1868" y="1093.8" width="9" height="2.4" fill="#1469af"/><rect x="1868" y="1147.8" width="9" height="2.4" fill="#1469af"/><rect x="1868" y="1202.8" width="9" height="2.4" fill="#1469af"/><rect x="1868" y="1256.8" width="9" height="2.4" fill="#1469af"/><rect x="1868" y="1311.8" width="9" height="2.4" fill="#1469af"/></svg>
<div class="t" style="left:1787px;width:100px;text-align:center;top:162.9px;font-size:26px">3</div>
<div class="t" style="left:1787px;width:100px;text-align:center;top:244.6px;font-size:26px">2.5</div>
<div class="t" style="left:1787px;width:100px;text-align:center;top:326.2px;font-size:26px">2</div>
<div class="t" style="left:1787px;width:100px;text-align:center;top:407.9px;font-size:26px">1.5</div>
<div class="t" style="left:1787px;width:100px;text-align:center;top:489.5px;font-size:26px">1</div>
<div class="t" style="left:1787px;width:100px;text-align:center;top:571.1px;font-size:26px">0.5</div>
<div class="t" style="left:1787px;width:100px;text-align:center;top:652.8px;font-size:26px">0</div>
<div class="t" style="left:1787px;width:100px;text-align:center;top:863.1px;font-size:26px">0.9</div>
<div class="t" style="left:1787px;width:100px;text-align:center;top:917.6px;font-size:26px">0.8</div>
<div class="t" style="left:1787px;width:100px;text-align:center;top:972.1px;font-size:26px">0.7</div>
<div class="t" style="left:1787px;width:100px;text-align:center;top:1026.6px;font-size:26px">0.6</div>
<div class="t" style="left:1787px;width:100px;text-align:center;top:1081.1px;font-size:26px">0.5</div>
<div class="t" style="left:1787px;width:100px;text-align:center;top:1135.6px;font-size:26px">0.4</div>
<div class="t" style="left:1787px;width:100px;text-align:center;top:1190.1px;font-size:26px">0.3</div>
<div class="t" style="left:1787px;width:100px;text-align:center;top:1244.6px;font-size:26px">0.2</div>
<div class="t" style="left:1787px;width:100px;text-align:center;top:1299.1px;font-size:26px">0.1</div>
<div class="r" style="left:1757px;top:680px;width:1401px;height:80px;overflow:hidden"><div class="t" style="left:23.5px;width:200px;text-align:center;top:6.0px;font-size:26px">2025-12-25</div><div class="t" style="left:21.0px;width:200px;text-align:center;top:38.0px;font-size:26px">20:40:00</div><div class="t" style="left:206.7px;width:200px;text-align:center;top:6.0px;font-size:26px">2025-12-25</div><div class="t" style="left:204.2px;width:200px;text-align:center;top:38.0px;font-size:26px">20:50:00</div><div class="t" style="left:389.9px;width:200px;text-align:center;top:6.0px;font-size:26px">2025-12-25</div><div class="t" style="left:387.4px;width:200px;text-align:center;top:38.0px;font-size:26px">21:00:00</div><div class="t" style="left:573.1px;width:200px;text-align:center;top:6.0px;font-size:26px">2025-12-25</div><div class="t" style="left:570.6px;width:200px;text-align:center;top:38.0px;font-size:26px">21:10:00</div><div class="t" style="left:756.3px;width:200px;text-align:center;top:6.0px;font-size:26px">2025-12-25</div><div class="t" style="left:753.8px;width:200px;text-align:center;top:38.0px;font-size:26px">21:20:00</div><div class="t" style="left:939.5px;width:200px;text-align:center;top:6.0px;font-size:26px">2025-12-25</div><div class="t" style="left:937.0px;width:200px;text-align:center;top:38.0px;font-size:26px">21:30:00</div><div class="t" style="left:1122.7px;width:200px;text-align:center;top:6.0px;font-size:26px">2025-12-25</div><div class="t" style="left:1120.2px;width:200px;text-align:center;top:38.0px;font-size:26px">21:40:00</div><div class="t" style="left:1287.5px;width:200px;text-align:center;top:6.0px;font-size:26px">2025-12-25</div><div class="t" style="left:1285.0px;width:200px;text-align:center;top:38.0px;font-size:26px">21:49:00</div></div>
<div class="t" style="left:1699px;top:406.5px;width:200px;text-align:center;font-size:31px;line-height:30px;transform:rotate(-90deg)">%</div>
<div class="t" style="left:1699px;top:1107px;width:200px;text-align:center;font-size:31px;line-height:30px;transform:rotate(-90deg)">Load average</div>
</body></html>
